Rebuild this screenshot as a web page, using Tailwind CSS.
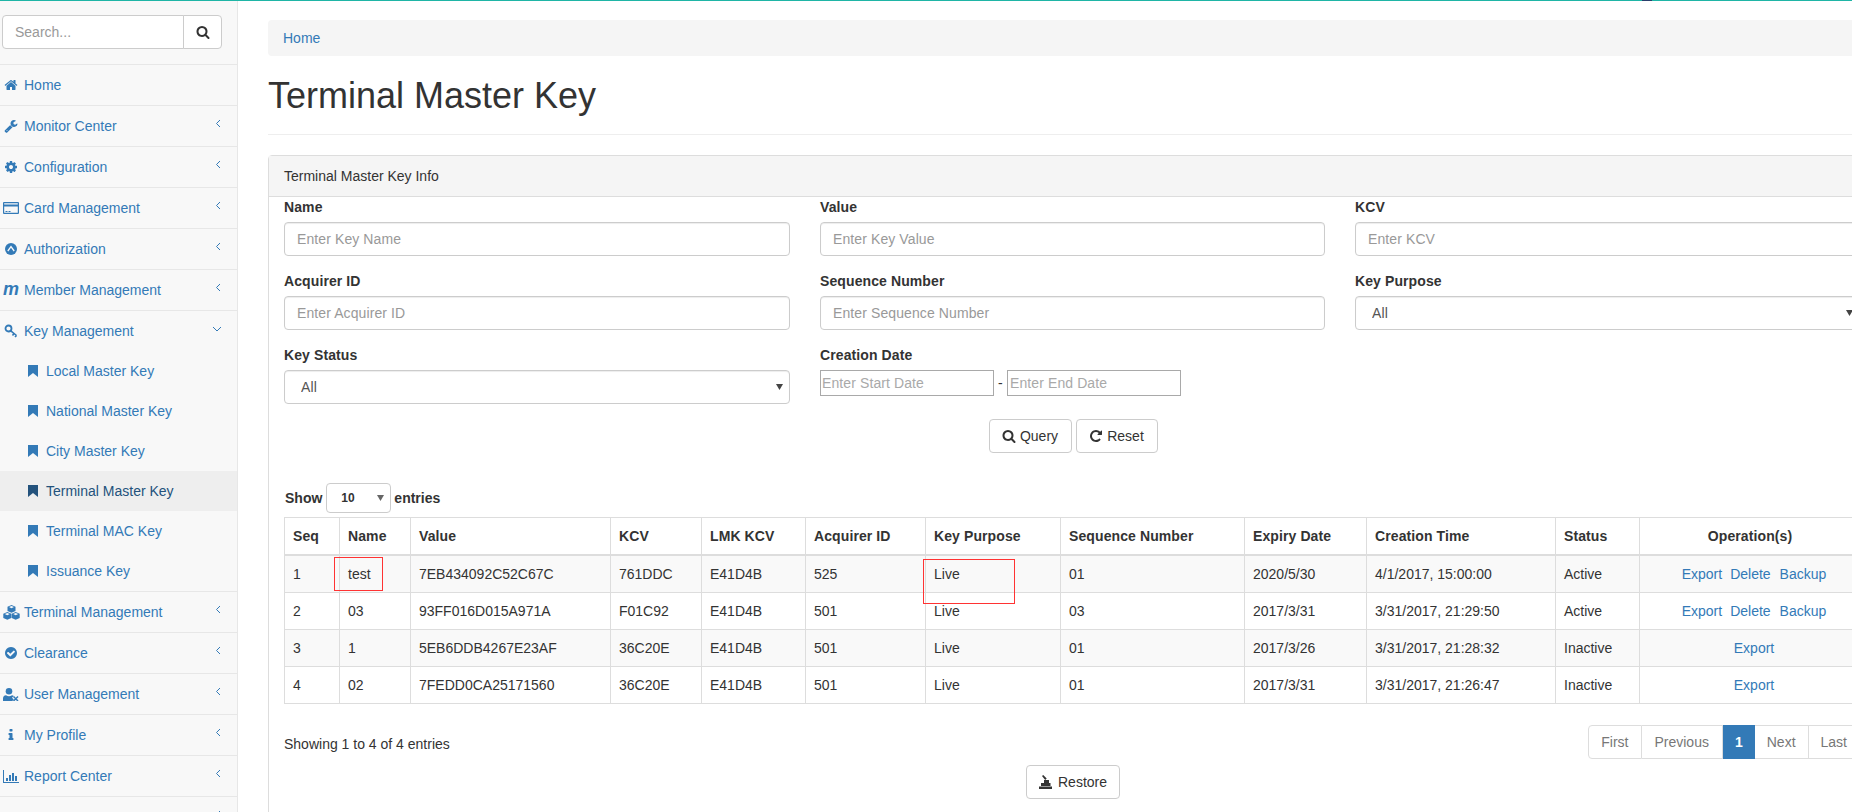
<!DOCTYPE html>
<html lang="en">
<head>
  <meta charset="UTF-8" />
  <meta name="viewport" content="width=device-width, initial-scale=1.0"/>
  <title>Terminal Master Key</title>
  <script src="https://cdn.jsdelivr.net/npm/@tailwindcss/browser@4"></script>
</head>
<body class="bg-white text-[#333] text-[14px] leading-5 font-['Liberation_Sans',Arial,sans-serif] h-[812px] overflow-hidden">
  <div class="h-px bg-[#1fb5a6]"></div>
  <div class="absolute top-0 left-[1642px] w-[10px] h-px bg-[#2a3f6b]"></div>

  <div class="flex w-[1908px] h-[811px] overflow-hidden">

    <!-- Sidebar -->
    <aside class="w-[238px] shrink-0 bg-[#f8f8f8] border-r border-[#e7e7e7] text-[#337ab7] overflow-hidden">
      <div class="h-[64px] pt-[14px] pl-[2px] pr-[15px] border-b border-[#e7e7e7]">
        <div class="flex h-[34px] w-[220px]">
          <input type="text" placeholder="Search..." class="w-[182px] h-[34px] px-3 bg-white border border-[#ccc] rounded-l outline-none placeholder:text-[#999]">
          <button class="w-[39px] h-[34px] -ml-px bg-white border border-[#ccc] rounded-r flex items-center justify-center text-[#333]">
            <svg class="w-[14px] h-[14px] fill-current" viewBox="0 0 1792 1792"><path d="M1216 832q0-185-131.500-316.500t-316.500-131.500-316.500 131.500-131.500 316.500 131.500 316.500 316.500 131.500 316.500-131.500 131.500-316.500zm512 832q0 52-38 90t-90 38q-54 0-90-38l-343-342q-179 124-399 124-143 0-273.500-55.500t-225-150-150-225-55.500-273.500 55.500-273.500 150-225 225-150 273.500-55.500 273.500 55.500 225 150 150 225 55.500 273.500q0 220-124 399l343 343q37 37 37 90z"/></svg>
          </button>
        </div>
      </div>

      <ul>
        <li class="border-b border-[#e7e7e7]">
          <a class="flex items-center h-10 pl-[3px]">
            <span class="w-4 flex justify-center"><svg class="w-[14px] h-[14px] fill-current" viewBox="0 0 1792 1792"><path d="M1472 992v480q0 26-19 45t-45 19h-384v-384h-256v384h-384q-26 0-45-19t-19-45v-480q0-1 .5-3t.5-3l575-474 575 474q1 2 1 6zm223-69l-62 74q-8 9-21 11h-3q-13 0-21-7l-692-577-692 577q-12 8-24 7-13-2-21-11l-62-74q-8-10-7-23.5t11-21.5l719-599q32-26 76-26t76 26l244 204v-195q0-14 9-23t23-9h192q14 0 23 9t9 23v408l219 182q10 8 11 21.5t-7 23.5z"/></svg></span>
            <span class="ml-[5px]">Home</span>
          </a>
        </li>
        <li class="border-b border-[#e7e7e7]">
          <a class="flex items-center h-10 pl-[3px]">
            <span class="w-4 flex justify-center"><svg class="w-[14px] h-[14px] fill-current" viewBox="0 0 1792 1792"><path d="M448 1472q0-26-19-45t-45-19-45 19-19 45 19 45 45 19 45-19 19-45zm644-420l-682 682q-37 37-90 37-52 0-91-37l-106-108q-38-36-38-90 0-53 38-91l681-681q39 98 114.500 173.500t173.500 114.500zm634-435q0 39-23 106-47 134-164.500 217.500t-258.500 83.500q-185 0-316.500-131.500t-131.500-316.500 131.500-316.500 316.500-131.500q58 0 121.500 16.500t107.500 46.500q16 11 16 28t-16 28l-293 169v224l193 107q5-3 79-48.500t135.500-81 70.500-35.500q15 0 23.500 10t8.500 25z"/></svg></span>
            <span class="ml-[5px]">Monitor Center</span>
            <svg class="w-[6px] h-[9px] ml-auto mr-[16px] mb-[5px] fill-none stroke-current" viewBox="0 0 6 9"><path d="M5 1 1.500 4.500 5 8"/></svg>
          </a>
        </li>
        <li class="border-b border-[#e7e7e7]">
          <a class="flex items-center h-10 pl-[3px]">
            <span class="w-4 flex justify-center"><svg class="w-[14px] h-[14px] fill-current" viewBox="0 0 1792 1792"><path d="M1152 896q0-106-75-181t-181-75-181 75-75 181 75 181 181 75 181-75 75-181zm512-109v222q0 12-8 23t-20 13l-185 28q-19 54-39 91 35 50 107 138 10 12 10 25t-9 23q-27 37-99 108t-94 71q-12 0-26-9l-138-108q-44 23-91 38-16 136-29 186-7 28-36 28h-222q-14 0-24.500-8.500t-11.500-21.500l-28-184q-49-16-90-37l-141 107q-10 9-25 9-14 0-25-11-126-114-165-168-7-10-7-23 0-12 8-23 15-21 51-66.500t54-70.500q-27-50-41-99l-183-27q-13-2-21-12.500t-8-23.500v-222q0-12 8-23t19-13l186-28q14-46 39-92-40-57-107-138-10-12-10-24 0-10 9-23 26-36 98.500-107.500t94.500-71.500q13 0 26 10l138 107q44-23 91-38 16-136 29-186 7-28 36-28h222q14 0 24.500 8.500t11.500 21.500l28 184q49 16 90 37l142-107q9-9 24-9 13 0 25 10 129 119 165 170 7 8 7 22 0 12-8 23-15 21-51 66.500t-54 70.500q26 50 41 98l183 28q13 2 21 12.500t8 23.500z"/></svg></span>
            <span class="ml-[5px]">Configuration</span>
            <svg class="w-[6px] h-[9px] ml-auto mr-[16px] mb-[5px] fill-none stroke-current" viewBox="0 0 6 9"><path d="M5 1 1.500 4.500 5 8"/></svg>
          </a>
        </li>
        <li class="border-b border-[#e7e7e7]">
          <a class="flex items-center h-10 pl-[3px]">
            <span class="w-4 flex justify-center"><svg class="w-4 h-3 fill-current" viewBox="0 0 16 12"><path fill-rule="evenodd" d="M1 0h14a1 1 0 0 1 1 1v10a1 1 0 0 1-1 1H1a1 1 0 0 1-1-1V1a1 1 0 0 1 1-1zm.2 1.200v1.300h13.600V1.200zm0 3.300v6.300h13.600V4.500zM2.500 9h2v1h-2zm3 0h2v1h-2z"/></svg></span>
            <span class="ml-[5px]">Card Management</span>
            <svg class="w-[6px] h-[9px] ml-auto mr-[16px] mb-[5px] fill-none stroke-current" viewBox="0 0 6 9"><path d="M5 1 1.500 4.500 5 8"/></svg>
          </a>
        </li>
        <li class="border-b border-[#e7e7e7]">
          <a class="flex items-center h-10 pl-[3px]">
            <span class="w-4 flex justify-center"><svg class="w-3 h-3" viewBox="0 0 12 12"><circle class="fill-current" cx="6" cy="6" r="6"/><path d="M2.800 8 6 3.500 9.200 8" fill="none" stroke="#f8f8f8" stroke-width="1.300"/></svg></span>
            <span class="ml-[5px]">Authorization</span>
            <svg class="w-[6px] h-[9px] ml-auto mr-[16px] mb-[5px] fill-none stroke-current" viewBox="0 0 6 9"><path d="M5 1 1.500 4.500 5 8"/></svg>
          </a>
        </li>
        <li class="border-b border-[#e7e7e7]">
          <a class="flex items-center h-10 pl-[3px]">
            <span class="w-4 flex justify-center font-['Liberation_Sans',sans-serif] font-bold italic text-[18px] leading-4 pb-[2px]">m</span>
            <span class="ml-[5px]">Member Management</span>
            <svg class="w-[6px] h-[9px] ml-auto mr-[16px] mb-[5px] fill-none stroke-current" viewBox="0 0 6 9"><path d="M5 1 1.500 4.500 5 8"/></svg>
          </a>
        </li>
        <li class="border-b border-[#e7e7e7]">
          <a class="flex items-center h-10 pl-[3px]">
            <span class="w-4 flex justify-center"><svg class="w-[14px] h-[14px]" viewBox="0 0 14 14"><circle cx="4.500" cy="4.500" r="3" class="stroke-current" fill="none" stroke-width="1.800"/><path d="M6.800 6.800 12.500 11.500M10 9.500 8.500 11.500M12.500 11.500 11 13" class="stroke-current" fill="none" stroke-width="1.600"/></svg></span>
            <span class="ml-[5px]">Key Management</span>
            <svg class="w-[10px] h-[6px] ml-auto mr-[15px] mb-[5px] fill-none stroke-current" viewBox="0 0 10 6"><path d="M1 1 5 5 9 1"/></svg>
          </a>
          <ul>
            <li>
              <a class="flex items-center h-10 pl-[28px]">
                <svg class="w-[10px] h-3 fill-current" viewBox="0 0 10 12"><path d="M0 0h10v12L5 8l-5 4z"/></svg>
                <span class="ml-2">Local Master Key</span>
              </a>
            </li>
            <li>
              <a class="flex items-center h-10 pl-[28px]">
                <svg class="w-[10px] h-3 fill-current" viewBox="0 0 10 12"><path d="M0 0h10v12L5 8l-5 4z"/></svg>
                <span class="ml-2">National Master Key</span>
              </a>
            </li>
            <li>
              <a class="flex items-center h-10 pl-[28px]">
                <svg class="w-[10px] h-3 fill-current" viewBox="0 0 10 12"><path d="M0 0h10v12L5 8l-5 4z"/></svg>
                <span class="ml-2">City Master Key</span>
              </a>
            </li>
            <li class="bg-[#eee] text-[#23527c]">
              <a class="flex items-center h-10 pl-[28px]">
                <svg class="w-[10px] h-3 fill-current" viewBox="0 0 10 12"><path d="M0 0h10v12L5 8l-5 4z"/></svg>
                <span class="ml-2">Terminal Master Key</span>
              </a>
            </li>
            <li>
              <a class="flex items-center h-10 pl-[28px]">
                <svg class="w-[10px] h-3 fill-current" viewBox="0 0 10 12"><path d="M0 0h10v12L5 8l-5 4z"/></svg>
                <span class="ml-2">Terminal MAC Key</span>
              </a>
            </li>
            <li>
              <a class="flex items-center h-10 pl-[28px]">
                <svg class="w-[10px] h-3 fill-current" viewBox="0 0 10 12"><path d="M0 0h10v12L5 8l-5 4z"/></svg>
                <span class="ml-2">Issuance Key</span>
              </a>
            </li>
          </ul>
        </li>
        <li class="border-b border-[#e7e7e7]">
          <a class="flex items-center h-10 pl-[3px]">
            <span class="w-4 flex justify-center"><svg class="w-[17px] h-[15px] shrink-0 fill-current" viewBox="0 0 17 15"><path fill-rule="evenodd" d="M8.500 0 12.500 1.800V6L8.500 7.800 4.500 6V1.800zM8.500 1 6 2.100 8.500 3.200 11 2.100zM4.300 7 8.300 8.800V13L4.300 14.800.3 13V8.800zM4.300 8 1.800 9.100 4.300 10.200 6.800 9.100zM12.700 7 16.700 8.800V13L12.700 14.800 8.700 13V8.800zM12.700 8 10.200 9.100 12.700 10.200 15.200 9.100z"/></svg></span>
            <span class="ml-[5px]">Terminal Management</span>
            <svg class="w-[6px] h-[9px] ml-auto mr-[16px] mb-[5px] fill-none stroke-current" viewBox="0 0 6 9"><path d="M5 1 1.500 4.500 5 8"/></svg>
          </a>
        </li>
        <li class="border-b border-[#e7e7e7]">
          <a class="flex items-center h-10 pl-[3px]">
            <span class="w-4 flex justify-center"><svg class="w-[14px] h-[14px] fill-current" viewBox="0 0 1792 1792"><path d="M1412 734q0-28-18-46l-91-90q-19-19-45-19t-45 19l-408 407-226-226q-19-19-45-19t-45 19l-91 90q-18 18-18 46 0 27 18 45l362 362q19 19 45 19 27 0 46-19l543-543q18-18 18-45zm252 162q0 209-103 385.500t-279.500 279.500-385.500 103-385.500-103-279.500-279.500-103-385.500 103-385.500 279.500-279.500 385.500-103 385.500 103 279.500 279.500 103 385.500z"/></svg></span>
            <span class="ml-[5px]">Clearance</span>
            <svg class="w-[6px] h-[9px] ml-auto mr-[16px] mb-[5px] fill-none stroke-current" viewBox="0 0 6 9"><path d="M5 1 1.500 4.500 5 8"/></svg>
          </a>
        </li>
        <li class="border-b border-[#e7e7e7]">
          <a class="flex items-center h-10 pl-[3px]">
            <span class="w-4 flex justify-center"><svg class="w-4 h-[13px] fill-current" viewBox="0 0 16 13"><circle cx="6" cy="3.300" r="3.300"/><path d="M0 13V10.500Q0 7.500 3 7.300 6 9 9 7.300 10 7.400 10.800 8L9 9.800 10.800 11.500 9.300 13z"/><path d="M10.500 8.500 15 13M15 8.500 10.500 13" class="stroke-current" stroke-width="1.500"/></svg></span>
            <span class="ml-[5px]">User Management</span>
            <svg class="w-[6px] h-[9px] ml-auto mr-[16px] mb-[5px] fill-none stroke-current" viewBox="0 0 6 9"><path d="M5 1 1.500 4.500 5 8"/></svg>
          </a>
        </li>
        <li class="border-b border-[#e7e7e7]">
          <a class="flex items-center h-10 pl-[3px]">
            <span class="w-4 flex justify-center"><svg class="w-[14px] h-[14px] fill-current" viewBox="0 0 1792 1792"><path d="M1216 1344v128q0 26-19 45t-45 19h-512q-26 0-45-19t-19-45v-128q0-26 19-45t45-19h64v-384h-64q-26 0-45-19t-19-45v-128q0-26 19-45t45-19h384q26 0 45 19t19 45v576h64q26 0 45 19t19 45zm-128-1152v192q0 26-19 45t-45 19h-256q-26 0-45-19t-19-45v-192q0-26 19-45t45-19h256q26 0 45 19t19 45z"/></svg></span>
            <span class="ml-[5px]">My Profile</span>
            <svg class="w-[6px] h-[9px] ml-auto mr-[16px] mb-[5px] fill-none stroke-current" viewBox="0 0 6 9"><path d="M5 1 1.500 4.500 5 8"/></svg>
          </a>
        </li>
        <li class="border-b border-[#e7e7e7]">
          <a class="flex items-center h-10 pl-[3px]">
            <span class="w-4 flex justify-center"><svg class="w-4 h-[13px] fill-current" viewBox="0 0 16 13"><path d="M0 0h1v12h15v1H0zM3 8h2v3H3zM6 5h2v6H6zM9 3h2v8H9zM12 6h2v5h-2z"/></svg></span>
            <span class="ml-[5px]">Report Center</span>
            <svg class="w-[6px] h-[9px] ml-auto mr-[16px] mb-[5px] fill-none stroke-current" viewBox="0 0 6 9"><path d="M5 1 1.500 4.500 5 8"/></svg>
          </a>
        </li>
        <li>
          <a class="flex items-center h-10 pl-[3px]">
            <svg class="w-[6px] h-[9px] ml-auto mr-[16px] mb-[5px] fill-none stroke-current" viewBox="0 0 6 9"><path d="M5 1 1.500 4.500 5 8"/></svg>
          </a>
        </li>
      </ul>
    </aside>

    <!-- Main -->
    <main class="w-[1640px] shrink-0 ml-[30px] pt-[19px]">
      <div class="h-9 bg-[#f5f5f5] rounded px-[15px] flex items-center"><a class="text-[#337ab7]">Home</a></div>

      <h1 class="mt-5 text-[36px] leading-10 pb-[18px] border-b border-[#eee]">Terminal Master Key</h1>

      <section class="mt-5 pb-10 border border-[#ddd] rounded-t">
        <div class="h-10 px-[15px] bg-[#f5f5f5] border-b border-[#ddd] box-content flex items-center">Terminal Master Key Info</div>

        <div class="pl-[15px] w-[1591px]">
          <!-- Query form -->
          <div class="grid grid-cols-[506px_505px_505px] gap-x-[30px] tracking-[0.1px]">
            <div class="mb-[15px]">
              <label class="block font-bold mb-[5px]">Name</label>
              <input type="text" placeholder="Enter Key Name" class="block w-full h-[34px] px-3 border border-[#ccc] rounded shadow-[inset_0_1px_1px_rgba(0,0,0,0.075)] text-[#555] placeholder:text-[#999]">
            </div>
            <div class="mb-[15px]">
              <label class="block font-bold mb-[5px]">Value</label>
              <input type="text" placeholder="Enter Key Value" class="block w-full h-[34px] px-3 border border-[#ccc] rounded shadow-[inset_0_1px_1px_rgba(0,0,0,0.075)] text-[#555] placeholder:text-[#999]">
            </div>
            <div class="mb-[15px]">
              <label class="block font-bold mb-[5px]">KCV</label>
              <input type="text" placeholder="Enter KCV" class="block w-full h-[34px] px-3 border border-[#ccc] rounded shadow-[inset_0_1px_1px_rgba(0,0,0,0.075)] text-[#555] placeholder:text-[#999]">
            </div>
            <div class="mb-[15px]">
              <label class="block font-bold mb-[5px]">Acquirer ID</label>
              <input type="text" placeholder="Enter Acquirer ID" class="block w-full h-[34px] px-3 border border-[#ccc] rounded shadow-[inset_0_1px_1px_rgba(0,0,0,0.075)] text-[#555] placeholder:text-[#999]">
            </div>
            <div class="mb-[15px]">
              <label class="block font-bold mb-[5px]">Sequence Number</label>
              <input type="text" placeholder="Enter Sequence Number" class="block w-full h-[34px] px-3 border border-[#ccc] rounded shadow-[inset_0_1px_1px_rgba(0,0,0,0.075)] text-[#555] placeholder:text-[#999]">
            </div>
            <div class="mb-[15px]">
              <label class="block font-bold mb-[5px]">Key Purpose</label>
              <div class="relative">
                <select class="block w-full h-[34px] pl-4 pr-3 border border-[#ccc] rounded appearance-none bg-white shadow-[inset_0_1px_1px_rgba(0,0,0,0.075)] text-[#555]"><option>All</option></select>
                <svg class="absolute right-[7px] top-[14px] w-[7px] h-[6px] fill-[#444]" viewBox="0 0 7 6"><path d="M0 0h7L3.500 6z"/></svg>
              </div>
            </div>
            <div class="mb-[15px]">
              <label class="block font-bold mb-[5px]">Key Status</label>
              <div class="relative">
                <select class="block w-full h-[34px] pl-4 pr-3 border border-[#ccc] rounded appearance-none bg-white shadow-[inset_0_1px_1px_rgba(0,0,0,0.075)] text-[#555]"><option>All</option></select>
                <svg class="absolute right-[7px] top-[14px] w-[7px] h-[6px] fill-[#444]" viewBox="0 0 7 6"><path d="M0 0h7L3.500 6z"/></svg>
              </div>
            </div>
            <div class="mb-[15px]">
              <label class="block font-bold mb-[5px]">Creation Date</label>
              <div class="flex items-center">
                <input type="text" placeholder="Enter Start Date" class="w-[174px] h-[26px] px-px border border-[#a9a9a9] placeholder:text-[#a9a9a9]">
                <span class="w-[13px] text-center">-</span>
                <input type="text" placeholder="Enter End Date" class="w-[174px] h-[26px] px-[2px] border border-[#a9a9a9] placeholder:text-[#a9a9a9]">
              </div>
            </div>
          </div>

          <div class="flex justify-center gap-1 w-[1576px] pl-[2px]">
            <button class="flex items-center justify-center w-[83px] h-[34px] bg-white border border-[#ccc] rounded">
              <svg class="w-[14px] h-[14px] mr-1 fill-current" viewBox="0 0 1792 1792"><path d="M1216 832q0-185-131.500-316.500t-316.500-131.500-316.500 131.500-131.500 316.500 131.500 316.500 316.500 131.500 316.500-131.500 131.500-316.500zm512 832q0 52-38 90t-90 38q-54 0-90-38l-343-342q-179 124-399 124-143 0-273.500-55.500t-225-150-150-225-55.500-273.500 55.500-273.500 150-225 225-150 273.500-55.500 273.500 55.500 225 150 150 225 55.500 273.500q0 220-124 399l343 343q37 37 37 90z"/></svg>
              Query
            </button>
            <button class="flex items-center justify-center w-[82px] h-[34px] bg-white border border-[#ccc] rounded">
              <svg class="w-[14px] h-[14px] mr-1 fill-current" viewBox="0 0 1792 1792"><path d="M1664 256v448q0 26-19 45t-45 19h-448q-42 0-59-40-17-39 14-69l138-138q-148-137-349-137-104 0-198.500 40.500t-163.500 109.500-109.500 163.500-40.500 198.500 40.500 198.500 109.500 163.500 163.500 109.500 198.500 40.500q119 0 225-52t179-147q7-10 23-12 15 0 25 9l137 138q9 8 9.500 20.500t-7.500 22.500q-109 132-264 204.500t-327 72.500q-156 0-298-61t-245-164-164-245-61-298 61-298 164-245 245-164 298-61q147 0 284.500 55.500t244.500 156.500l130-129q29-31 70-14 39 17 39 59z"/></svg>
              Reset
            </button>
          </div>

          <!-- Length select -->
          <div class="flex items-center h-[30px] mt-[30px] mb-1 font-bold">
            <span class="ml-px">Show</span>
            <div class="relative ml-1">
              <select class="block w-[65px] h-[30px] pl-[14px] border border-[#ccc] rounded appearance-none bg-white text-[12px] text-[#333]"><option>10</option></select>
              <svg class="absolute right-[7px] top-[12px] w-[7px] h-[6px] fill-[#666]" viewBox="0 0 7 6"><path d="M0 0h7L3.500 6z"/></svg>
            </div>
            <span class="ml-[3px]">entries</span>
          </div>

          <!-- Table -->
          <div class="relative w-[1576px]">
            <table class="w-[1576px] table-fixed border-collapse">
              <colgroup>
                <col class="w-[55px]"><col class="w-[71px]"><col class="w-[200px]"><col class="w-[91px]"><col class="w-[104px]"><col class="w-[120px]"><col class="w-[135px]"><col class="w-[184px]"><col class="w-[122px]"><col class="w-[189px]"><col class="w-[84px]"><col class="w-[221px]">
              </colgroup>
              <thead class="tracking-[0.1px]">
                <tr>
                  <th class="border border-[#ddd] border-b-2 p-2 text-left">Seq</th>
                  <th class="border border-[#ddd] border-b-2 p-2 text-left">Name</th>
                  <th class="border border-[#ddd] border-b-2 p-2 text-left">Value</th>
                  <th class="border border-[#ddd] border-b-2 p-2 text-left">KCV</th>
                  <th class="border border-[#ddd] border-b-2 p-2 text-left">LMK KCV</th>
                  <th class="border border-[#ddd] border-b-2 p-2 text-left">Acquirer ID</th>
                  <th class="border border-[#ddd] border-b-2 p-2 text-left">Key Purpose</th>
                  <th class="border border-[#ddd] border-b-2 p-2 text-left">Sequence Number</th>
                  <th class="border border-[#ddd] border-b-2 p-2 text-left">Expiry Date</th>
                  <th class="border border-[#ddd] border-b-2 p-2 text-left">Creation Time</th>
                  <th class="border border-[#ddd] border-b-2 p-2 text-left">Status</th>
                  <th class="border border-[#ddd] border-b-2 p-2 text-center">Operation(s)</th>
                </tr>
              </thead>
              <tbody>
                <tr class="bg-[#f9f9f9]">
                  <td class="border border-[#ddd] p-2">1</td>
                  <td class="border border-[#ddd] p-2">test</td>
                  <td class="border border-[#ddd] p-2">7EB434092C52C67C</td>
                  <td class="border border-[#ddd] p-2">761DDC</td>
                  <td class="border border-[#ddd] p-2">E41D4B</td>
                  <td class="border border-[#ddd] p-2">525</td>
                  <td class="border border-[#ddd] p-2">Live</td>
                  <td class="border border-[#ddd] p-2">01</td>
                  <td class="border border-[#ddd] p-2">2020/5/30</td>
                  <td class="border border-[#ddd] p-2">4/1/2017, 15:00:00</td>
                  <td class="border border-[#ddd] p-2">Active</td>
                  <td class="border border-[#ddd] py-2 pl-4 pr-2 text-center text-[#337ab7]"><a>Export</a><a class="ml-2">Delete</a><a class="ml-[9px]">Backup</a></td>
                </tr>
                <tr>
                  <td class="border border-[#ddd] p-2">2</td>
                  <td class="border border-[#ddd] p-2">03</td>
                  <td class="border border-[#ddd] p-2">93FF016D015A971A</td>
                  <td class="border border-[#ddd] p-2">F01C92</td>
                  <td class="border border-[#ddd] p-2">E41D4B</td>
                  <td class="border border-[#ddd] p-2">501</td>
                  <td class="border border-[#ddd] p-2">Live</td>
                  <td class="border border-[#ddd] p-2">03</td>
                  <td class="border border-[#ddd] p-2">2017/3/31</td>
                  <td class="border border-[#ddd] p-2">3/31/2017, 21:29:50</td>
                  <td class="border border-[#ddd] p-2">Active</td>
                  <td class="border border-[#ddd] py-2 pl-4 pr-2 text-center text-[#337ab7]"><a>Export</a><a class="ml-2">Delete</a><a class="ml-[9px]">Backup</a></td>
                </tr>
                <tr class="bg-[#f9f9f9]">
                  <td class="border border-[#ddd] p-2">3</td>
                  <td class="border border-[#ddd] p-2">1</td>
                  <td class="border border-[#ddd] p-2">5EB6DDB4267E23AF</td>
                  <td class="border border-[#ddd] p-2">36C20E</td>
                  <td class="border border-[#ddd] p-2">E41D4B</td>
                  <td class="border border-[#ddd] p-2">501</td>
                  <td class="border border-[#ddd] p-2">Live</td>
                  <td class="border border-[#ddd] p-2">01</td>
                  <td class="border border-[#ddd] p-2">2017/3/26</td>
                  <td class="border border-[#ddd] p-2">3/31/2017, 21:28:32</td>
                  <td class="border border-[#ddd] p-2">Inactive</td>
                  <td class="border border-[#ddd] py-2 pl-4 pr-2 text-center text-[#337ab7]"><a>Export</a></td>
                </tr>
                <tr>
                  <td class="border border-[#ddd] p-2">4</td>
                  <td class="border border-[#ddd] p-2">02</td>
                  <td class="border border-[#ddd] p-2">7FEDD0CA25171560</td>
                  <td class="border border-[#ddd] p-2">36C20E</td>
                  <td class="border border-[#ddd] p-2">E41D4B</td>
                  <td class="border border-[#ddd] p-2">501</td>
                  <td class="border border-[#ddd] p-2">Live</td>
                  <td class="border border-[#ddd] p-2">01</td>
                  <td class="border border-[#ddd] p-2">2017/3/31</td>
                  <td class="border border-[#ddd] p-2">3/31/2017, 21:26:47</td>
                  <td class="border border-[#ddd] p-2">Inactive</td>
                  <td class="border border-[#ddd] py-2 pl-4 pr-2 text-center text-[#337ab7]"><a>Export</a></td>
                </tr>
              </tbody>
            </table>
            <!-- red annotation boxes drawn on the screenshot -->
            <div class="absolute left-[50px] top-[40px] w-[49px] h-[34px] border border-[#f33]"></div>
            <div class="absolute left-[639px] top-[42px] w-[92px] h-[45px] border border-[#f33]"></div>
          </div>

          <div class="flex justify-between items-start w-[1576px] mt-[21px]">
            <div class="pt-[9px]">Showing 1 to 4 of 4 entries</div>
            <div class="flex h-[34px] text-[#777]">
              <a class="flex items-center pl-3 pr-[13px] border border-[#ddd] rounded-l">First</a>
              <a class="flex items-center pl-3 pr-[13px] border border-l-0 border-[#ddd]">Previous</a>
              <a class="flex items-center px-3 bg-[#337ab7] text-white font-bold">1</a>
              <a class="flex items-center px-3 border border-l-0 border-[#ddd]">Next</a>
              <a class="flex items-center px-3 border border-l-0 border-[#ddd] rounded-r">Last</a>
            </div>
          </div>

          <div class="flex justify-center w-[1576px] mt-[6px] pl-[2px]">
            <button class="flex items-center h-[34px] px-3 bg-white border border-[#ccc] rounded">
              <svg class="w-[13px] h-[14px] mr-[6px] fill-current" viewBox="0 0 13 14"><path d="M0 11.500h13V14H0zM2 8h9.500v3H2zM5 5h5v3H5zM3 1l1.200-1 3.500 3.500-1.500 1.500z"/></svg>
              Restore
            </button>
          </div>
        </div>
      </section>
    </main>
  </div>
</body>
</html>
